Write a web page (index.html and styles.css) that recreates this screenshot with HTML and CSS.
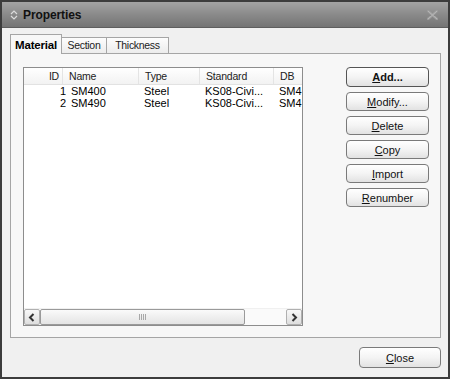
FILE: index.html
```html
<!DOCTYPE html>
<html>
<head>
<meta charset="utf-8">
<link rel="stylesheet" href="styles.css">
</head>
<body>
<div class="window">
  <div class="titlebar">
    <svg class="ticon" width="8" height="10" viewBox="0 0 8 10"><path d="M1 4 L4 1 L7 4 M1 6 L4 9 L7 6" fill="none" stroke="#dcdcdc" stroke-width="1.2"/></svg>
    <span class="title">Properties</span>
    <svg class="xicon" width="11" height="10" viewBox="0 0 11 10"><path d="M1 1 L10 9 M10 1 L1 9" stroke="#9c9c9c" stroke-width="2.4" stroke-linecap="round"/><path d="M1 1 L10 9 M10 1 L1 9" stroke="#b8b8b8" stroke-width="1"/></svg>
  </div>
  <div class="content">
    <div class="tabs">
      <div class="tab active">Material</div>
      <div class="tab t2">Section</div>
      <div class="tab t3">Thickness</div>
    </div>
    <div class="panel">
      <div class="list">
        <div class="hdr">
          <div class="c cid">ID</div>
          <div class="c">Name</div>
          <div class="c">Type</div>
          <div class="c">Standard</div>
          <div class="c">DB</div>
        </div>
        <div class="rows">
          <div class="row"><div class="c cid">1</div><div class="c">SM400</div><div class="c">Steel</div><div class="c">KS08-Civi...</div><div class="c">SM4</div></div>
          <div class="row"><div class="c cid">2</div><div class="c">SM490</div><div class="c">Steel</div><div class="c">KS08-Civi...</div><div class="c">SM4</div></div>
        </div>
        <div class="hscroll">
          <div class="sbtn"><svg width="8" height="9" viewBox="0 0 8 9"><path d="M5.5 1 L2 4.5 L5.5 8" fill="none" stroke="#333" stroke-width="2"/></svg></div>
          <div class="thumb"><span class="grip"></span></div>
          <div class="track"></div>
          <div class="sbtn"><svg width="8" height="9" viewBox="0 0 8 9"><path d="M2.5 1 L6 4.5 L2.5 8" fill="none" stroke="#333" stroke-width="2"/></svg></div>
        </div>
      </div>
      <div class="btns">
        <button class="btn def"><u>A</u>dd...</button>
        <button class="btn"><u>M</u>odify...</button>
        <button class="btn"><u>D</u>elete</button>
        <button class="btn"><u>C</u>opy</button>
        <button class="btn"><u>I</u>mport</button>
        <button class="btn"><u>R</u>enumber</button>
      </div>
    </div>
    <div class="footer">
      <button class="btn close"><u>C</u>lose</button>
    </div>
  </div>
</div>
</body>
</html>
```

FILE: styles.css
```css
* { box-sizing: border-box; }
html, body { margin: 0; padding: 0; }
body {
  width: 450px; height: 379px;
  font-family: "Liberation Sans", Arial, sans-serif;
  font-size: 11px;
  color: #000;
  background: #3a3a3a;
}
.window {
  width: 450px; height: 379px;
  border: 2px solid #3c3c3c;
  display: flex; flex-direction: column;
  background: #f0f0f0;
}
.titlebar {
  height: 26px;
  background: linear-gradient(#a3a3a3, #8a8a8a 50%, #747474);
  display: flex; align-items: center;
  padding-left: 8px; padding-right: 10px;
  border-bottom: 1px solid #5e5e5e;
}
.ticon { margin-right: 5px; margin-top: 1px; }
.title { font-weight: bold; font-size: 12px; color: #111; flex: 1; letter-spacing: -0.1px; }
.xicon { margin-top: 1px; }
.content {
  flex: 1;
  display: flex; flex-direction: column;
  padding: 6px 7px 9px 8px;
}
.tabs {
  display: flex; align-items: flex-end;
  height: 19px;
  position: relative; z-index: 1;
}
.tab {
  height: 16px;
  border: 1px solid #a5a5a5;
  border-bottom: none;
  border-left: none;
  background: linear-gradient(#fdfdfd, #ececec);
  line-height: 15px;
  color: #222;
  text-align: center;
  font-size: 10.5px;
  letter-spacing: -0.3px;
}
.t2 { width: 45px; }
.t3 { width: 62px; }
.tab.active {
  width: 52px;
  height: 20px;
  margin-bottom: -1px;
  border-left: 1px solid #a5a5a5;
  background: #f7f7f7;
  font-weight: bold;
  font-size: 11.5px;
  letter-spacing: -0.2px;
  line-height: 20px;
  color: #000;
}
.panel {
  height: 285px;
  border: 1px solid #a5a5a5;
  background: #f7f7f7;
  display: flex;
  padding: 13px 11px 0 12px;
  gap: 43px;
}
.list {
  width: 282px; height: 259px;
  border: 1px solid #8d8d8d;
  background: #fff;
  display: flex; flex-direction: column;
}
.hdr {
  height: 17px;
  display: grid;
  grid-template-columns: 39px 76px 61px 74px 1fr;
  background: linear-gradient(#ffffff, #f2f2f2);
  border-bottom: 1px solid #e2e2e2;
  line-height: 16px;
  color: #222;
  font-size: 10.5px;
  letter-spacing: -0.2px;
}
.hdr .c { border-right: 1px solid #e4e4e4; padding-left: 6px; }
.hdr .c:last-child { border-right: none; }
.hdr .cid { text-align: right; padding-right: 3px; padding-left: 0; }
.rows { flex: 1; padding-top: 0; }
.row {
  display: grid;
  grid-template-columns: 42px 73px 61px 74px 1fr;
  height: 12px;
  line-height: 12px;
  font-size: 11px;
  white-space: nowrap;
  overflow: hidden;
}
.row .c { padding-left: 5px; overflow: hidden; }
.row .cid { text-align: right; padding-left: 0; }
.hscroll {
  height: 17px;
  display: flex;
  background: #fafafa;
  border-top: 1px solid #f0f0f0;
}
.sbtn {
  width: 16px; height: 16px;
  border: 1px solid #b0b0b0;
  border-radius: 2px;
  background: linear-gradient(#f8f8f8, #dedede);
  display: flex; align-items: center; justify-content: center;
}
.thumb {
  width: 205px; height: 16px;
  border: 1px solid #9a9a9a;
  border-radius: 2px;
  background: linear-gradient(#fafafa, #e4e4e4);
  display: flex; align-items: center; justify-content: center;
}
.grip {
  width: 7px; height: 6px;
  background: repeating-linear-gradient(90deg, #a8a8a8 0 1px, transparent 1px 2px);
}
.track { flex: 1; }
.btns {
  display: flex; flex-direction: column; gap: 5px;
  width: 83px;
}
.btn {
  font-family: "Liberation Sans", Arial, sans-serif;
  font-size: 11px;
  height: 19px;
  width: 83px;
  padding: 0;
  border: 1px solid #7a7a7a;
  border-radius: 4px;
  background: linear-gradient(#ffffff, #f4f4f4 50%, #e2e2e2);
  color: #111;
  line-height: 16px;
}
.btn.def { font-weight: bold; border-color: #555; height: 20px; }
.footer {
  flex: 1;
  display: flex; justify-content: flex-end; align-items: flex-end;
}
.close { width: 82px; height: 21px; }
```
